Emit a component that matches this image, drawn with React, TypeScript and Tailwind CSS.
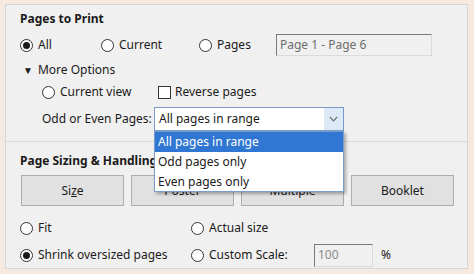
import React from "react";

const font = { fontFamily: '"Noto Sans", "Open Sans", sans-serif' };

function Radio({ checked = false }: { checked?: boolean }) {
  return (
    <span className="flex h-[13px] w-[13px] shrink-0 items-center justify-center rounded-full border border-[#333333] bg-white">
      {checked && <span className="h-[7px] w-[7px] rounded-full bg-[#1a1a1a]" />}
    </span>
  );
}

function RadioLabel({ checked = false, label, w }: { checked?: boolean; label: string; w?: string }) {
  return (
    <div className={`flex items-center gap-[5px] ${w ?? ""}`}>
      <Radio checked={checked} />
      <span>{label}</span>
    </div>
  );
}

function Btn({ children }: { children: React.ReactNode }) {
  return (
    <div className="flex h-[31px] w-[103px] items-center justify-center border border-[#adadad] bg-[#e1e1e1] text-[#1a1a1a]">
      {children}
    </div>
  );
}

export default function App() {
  return (
    <div
      className="h-[274px] w-[474px] overflow-hidden bg-[#f5e9e0] pl-[5px] pt-[4px] text-[12px] text-[#1a1a1a]"
      style={font}
    >
      <div className="relative h-[265px] w-[463px] border border-[#d6d6d6] bg-[#f0f0f0]">
        {/* Section 1 */}
        <div className="h-[137px] border-b border-[#d9d9d9] pl-[14px] pt-[2px]">
          <div className="flex h-[20px] items-center pt-[4px] font-bold">Pages to Print</div>
          <div className="mt-[6px] flex h-[24px] items-center">
            <RadioLabel checked label="All" w="w-[81px]" />
            <RadioLabel label="Current" w="w-[98px]" />
            <RadioLabel label="Pages" w="w-[77px]" />
            <div className="flex h-[22px] w-[156px] items-center border border-[#dadada] border-l-[#7a7a7a] border-t-[#7a7a7a] bg-[#f0f0f0] pl-[3px] text-[#6d6d6d]">
              Page 1 - Page 6
            </div>
          </div>
          <div className="mt-[1px] flex h-[24px] items-center pl-[3px]">
            <span className="mr-[5px] text-[10px] leading-none">▼</span>
            <span>More Options</span>
          </div>
          <div className="flex h-[20px] items-center pl-[22px]">
            <RadioLabel label="Current view" w="w-[116px]" />
            <div className="flex items-center gap-[4px]">
              <span className="h-[13px] w-[13px] border border-[#333333] bg-white" />
              <span>Reverse pages</span>
            </div>
          </div>
          <div className="mt-[5px] flex h-[24px] items-center pl-[22px]">
            <span className="w-[112px]">Odd or Even Pages:</span>
            <div className="flex h-[24px] w-[190px] items-center border border-[#7a9cc8] bg-white">
              <span className="flex-1 pl-[4px]">All pages in range</span>
              <span className="flex h-[22px] w-[19px] items-center justify-center bg-[#dde9f6]">
                <svg width="9" height="6" viewBox="0 0 9 6" fill="none" stroke="#666" strokeWidth="1.2">
                  <path d="M0.8 0.8 L4.5 4.8 L8.2 0.8" />
                </svg>
              </span>
            </div>
          </div>
        </div>

        {/* Section 2 */}
        <div className="pl-[14px]">
          <div className="mt-[9px] flex h-[20px] items-center font-bold">Page Sizing &amp; Handling</div>
          <div className="mt-[4px] flex gap-[7px] pl-[1px]">
            <Btn>
              Si<span className="underline">z</span>e
            </Btn>
            <Btn>Poster</Btn>
            <Btn>Multiple</Btn>
            <Btn>Booklet</Btn>
          </div>
          <div className="mt-[11px] flex h-[22px] items-center">
            <RadioLabel label="Fit" w="w-[171px]" />
            <RadioLabel label="Actual size" />
          </div>
          <div className="mt-[4px] flex h-[24px] items-center">
            <RadioLabel checked label="Shrink oversized pages" w="w-[171px]" />
            <RadioLabel label="Custom Scale:" w="w-[123px]" />
            <div className="flex h-[23px] w-[59px] items-center border border-[#dadada] border-l-[#7a7a7a] border-t-[#7a7a7a] bg-[#f0f0f0] pl-[3px] text-[#8a8a8a]">
              100
            </div>
            <span className="ml-[8px]">%</span>
          </div>
        </div>

        {/* Dropdown overlay */}
        <div className="absolute left-[148px] top-[126px] w-[190px] border border-[#7a9cc8] bg-white shadow-[2px_2px_3px_rgba(0,0,0,0.3)]">
          <div className="flex h-[20px] items-center bg-[#3077d3] pl-[3px] text-white">All pages in range</div>
          <div className="flex h-[20px] items-center pl-[3px]">Odd pages only</div>
          <div className="flex h-[19px] items-center pl-[3px]">Even pages only</div>
        </div>
      </div>
    </div>
  );
}
